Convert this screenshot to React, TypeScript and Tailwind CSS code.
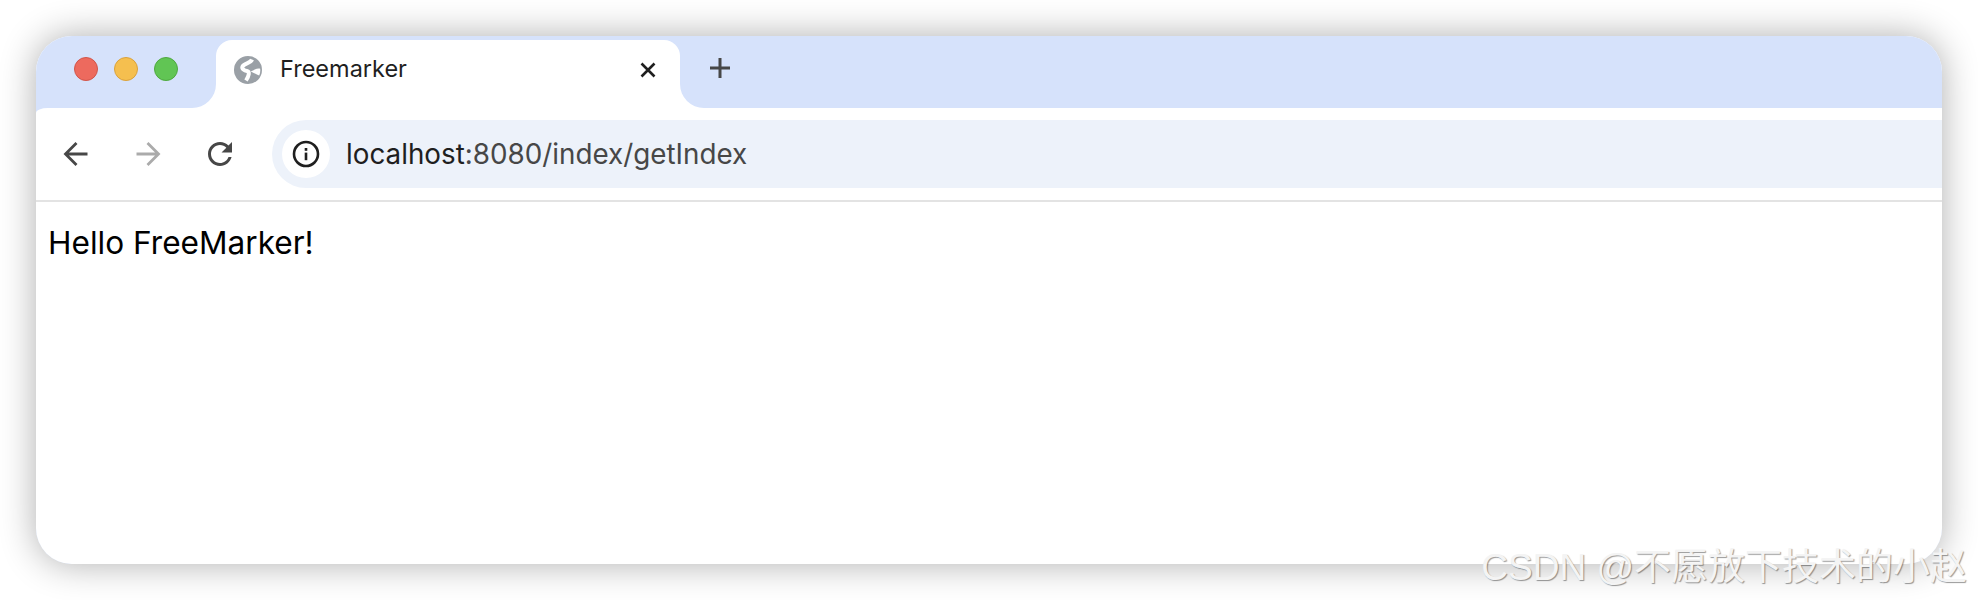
const BackIcon = ({ className }: { className: string }) => (
  <svg width="36" height="36" viewBox="0 0 36 36" fill="none" stroke="currentColor" strokeWidth="2.8" className={className}>
    <path d="M29.5 18H7.5M18.5 7L7.5 18L18.5 29" />
  </svg>
);

const ReloadIcon = () => (
  <svg width="36" height="36" viewBox="0 0 24 24" fill="#474747">
    <path d="M17.65 6.35C16.2 4.9 14.21 4 12 4c-4.42 0-7.99 3.58-7.99 8s3.57 8 7.99 8c3.73 0 6.84-2.55 7.73-6h-2.08c-.82 2.33-3.04 4-5.65 4-3.31 0-6-2.69-6-6s2.69-6 6-6c1.66 0 3.14.69 4.22 1.78L13 11h7V4l-2.35 2.35z" />
  </svg>
);

const GlobeIcon = () => (
  <svg width="28" height="28" viewBox="0 0 28 28">
    <circle cx="14" cy="14" r="14" fill="#9aa0a6" />
    <path d="M18 3.5C16.5 7.5 10 7 8.5 10.5C7.5 13 10.5 14.5 13 15C16 15.6 15 20 12 24.5" fill="none" stroke="#fff" strokeWidth="4" />
    <path d="M18.5 15.5C21 14.5 23 12.5 25.5 13.2C25.8 15.5 25.4 17 24.8 18.5C22 17.5 20.5 16.5 18.5 15.5Z" fill="#fff" stroke="#fff" strokeWidth="1.4" />
  </svg>
);

const App = () => {
  return (
    <div className="relative h-[600px] w-[1978px] overflow-hidden bg-white pl-[36px] pt-[36px] font-['Inter',sans-serif]">
      <div className="h-[528px] w-[1906px] rounded-[36px] bg-[#d6e2fb] shadow-[0_0_36px_rgba(0,0,0,0.32)]">
        <div className="flex h-full flex-col overflow-hidden rounded-[36px]">
          <div className="flex h-[72px] shrink-0">
            <div className="w-[180px] bg-white">
              <div className="flex h-full items-center gap-[16px] rounded-br-[24px] bg-[#d6e2fb] pb-[6px] pl-[38px]">
                <span className="h-[24px] w-[24px] rounded-full border border-[#d0554a] bg-[#ed6a5e]" />
                <span className="h-[24px] w-[24px] rounded-full border border-[#d9a13c] bg-[#f5bf4f]" />
                <span className="h-[24px] w-[24px] rounded-full border border-[#4fa83f] bg-[#61c554]" />
              </div>
            </div>
            <div className="w-[464px] bg-[#d6e2fb] pt-[4px]">
              <div className="flex h-full items-center rounded-t-[16px] bg-white pb-[8px] pl-[18px] pr-[22px]">
                <GlobeIcon />
                <span className="ml-[18px] pb-[3px] text-[23.5px] text-[#1f1f1f]">Freemarker</span>
                <svg width="20" height="20" viewBox="0 0 20 20" fill="none" stroke="#1f1f1f" strokeWidth="2.6" className="ml-auto">
                  <path d="M3.5 3.5L16.5 16.5M16.5 3.5L3.5 16.5" />
                </svg>
              </div>
            </div>
            <div className="flex-1 bg-white">
              <div className="flex h-full items-center rounded-bl-[24px] bg-[#d6e2fb] pb-[8px] pl-[28px]">
                <svg width="24" height="24" viewBox="0 0 24 24" fill="none" stroke="#474747" strokeWidth="3">
                  <path d="M12 2V22M2 12H22" />
                </svg>
              </div>
            </div>
          </div>
          <div className="flex h-[92px] shrink-0 items-center rounded-tl-[12px_5px] bg-white pl-[4px]">
            <div className="flex w-[72px] justify-center">
              <BackIcon className="text-[#474747]" />
            </div>
            <div className="flex w-[72px] justify-center">
              <BackIcon className="rotate-180 text-[#ababab]" />
            </div>
            <div className="flex w-[72px] justify-center">
              <ReloadIcon />
            </div>
            <div className="ml-[16px] flex h-[68px] flex-1 items-center rounded-l-[34px] bg-[#edf2fa] pl-[10px]">
              <div className="flex h-[48px] w-[48px] items-center justify-center rounded-full bg-white">
                <svg width="28" height="28" viewBox="0 0 28 28" fill="none">
                  <circle cx="14" cy="14" r="12" stroke="#1f1f1f" strokeWidth="2.6" />
                  <rect x="12.7" y="12.6" width="2.6" height="7.6" fill="#1f1f1f" />
                  <rect x="12.7" y="8" width="2.6" height="2.8" fill="#1f1f1f" />
                </svg>
              </div>
              <div className="ml-[16px] pt-[2px] text-[27.8px] text-[#474747]">
                <span className="text-[#1f1f1f]">localhost</span>:8080/index/getIndex
              </div>
            </div>
          </div>
          <div className="flex-1 border-t-2 border-[#e3e3e3] bg-white pl-[12px] pt-[21px] text-[31.6px] leading-[40px] text-black">
            Hello FreeMarker!
          </div>
        </div>
      </div>
      <div className="absolute right-[11px] top-[543px] font-['Liberation_Sans','Noto_Sans_CJK_SC',sans-serif] text-[37px] leading-[50px] text-[#f4f4f4] [text-shadow:1px_1px_1px_rgba(0,0,0,0.4)]">
        CSDN @不愿放下技术的小赵
      </div>
    </div>
  );
};

export default App;
